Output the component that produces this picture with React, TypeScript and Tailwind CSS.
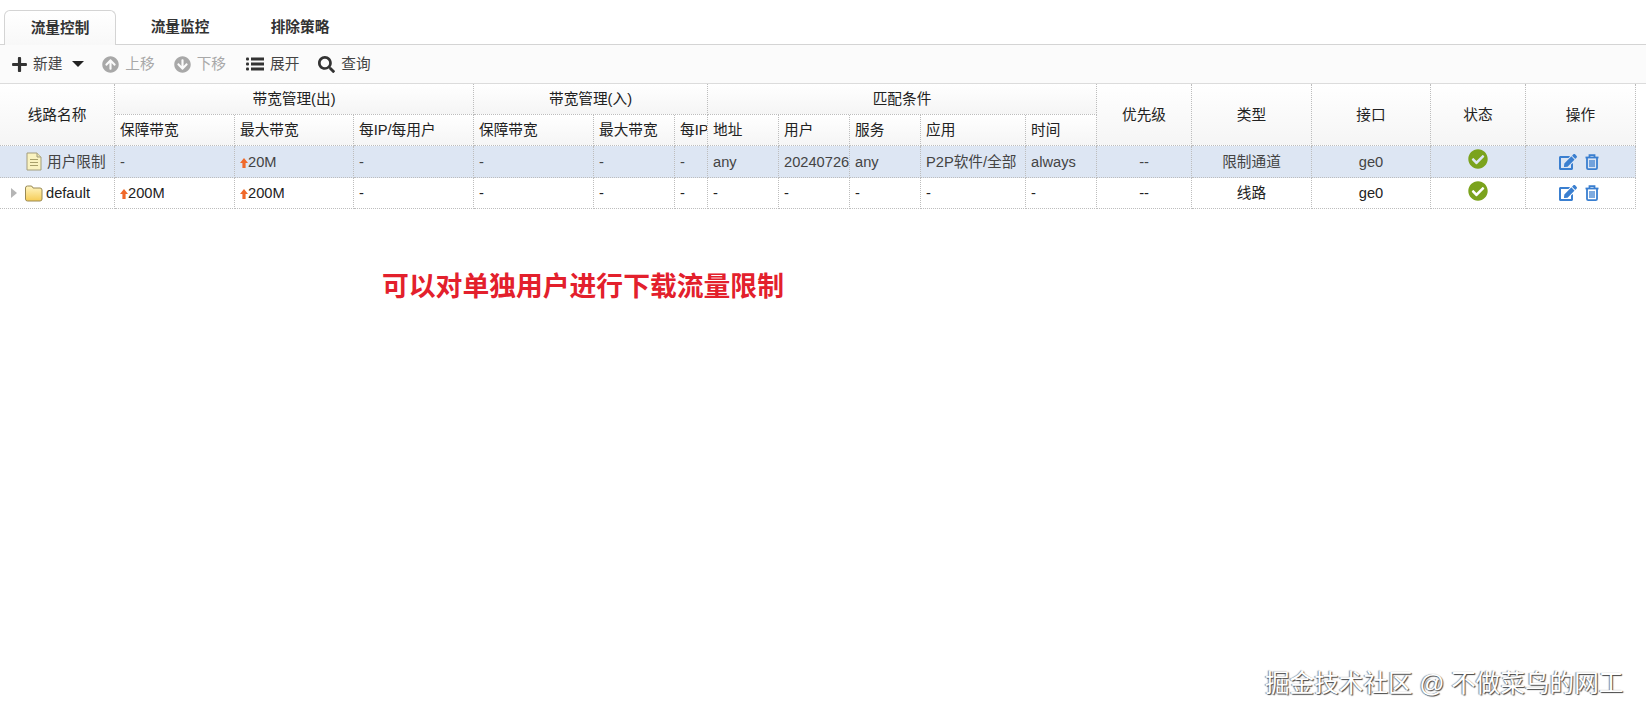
import { FaArrowCircleDown, FaArrowCircleUp, FaCheckCircle, FaEdit, FaPlus, FaSearch } from "react-icons/fa";

const COLUMN_WIDTHS = [115, 120, 119, 120, 120, 81, 33, 71, 71, 71, 105, 71, 95, 120, 119, 95, 110];

const SUB_HEADERS = [
  "保障带宽",
  "最大带宽",
  "每IP/每用户",
  "保障带宽",
  "最大带宽",
  "每IP/每用户",
  "地址",
  "用户",
  "服务",
  "应用",
  "时间",
];

const TABS = ["流量控制", "流量监控", "排除策略"];

const cellBorder = "border-r border-b border-dotted border-[#bdbdbd]";
const headCell = `${cellBorder} bg-gradient-to-b from-white to-[#f5f5f5] font-normal text-[#222] overflow-hidden whitespace-nowrap`;
const textCell = `${cellBorder} px-[5px] overflow-hidden whitespace-nowrap`;
const midCell = `${cellBorder} text-center overflow-hidden whitespace-nowrap`;

function UpArrow() {
  return (
    <svg width="8" height="10" viewBox="0 0 8 10" className="inline-block align-[-1px]">
      <path d="M4 0 L8 5 H5.6 V10 H2.4 V5 H0 Z" fill="#f0692a" />
    </svg>
  );
}

function FolderIcon() {
  return (
    <svg width="19" height="17" viewBox="0 0 19 17">
      <defs>
        <linearGradient id="folder-fill" x1="0" y1="0" x2="0" y2="1">
          <stop offset="0" stopColor="#fff6c4" />
          <stop offset="1" stopColor="#f6cc55" />
        </linearGradient>
      </defs>
      <path
        d="M1.5 3 Q1.5 1 3.5 1 H7 Q8.5 1 9 3 H16 Q18 3 18 5 V14 Q18 16 16 16 H3.5 Q1.5 16 1.5 14 Z"
        fill="url(#folder-fill)"
        stroke="#9a8a55"
      />
    </svg>
  );
}

function NoteIcon() {
  return (
    <svg width="16" height="19" viewBox="0 0 16 19">
      <path d="M1 1 H11 L15 5 V18 H1 Z" fill="#faf3c0" stroke="#a39d7c" />
      <path d="M11 1 V5 H15" fill="#e8e2b0" stroke="#a39d7c" />
      <path d="M4 7.5 H12 M4 10.5 H12 M4 13.5 H12" stroke="#a8a06a" />
    </svg>
  );
}

function ListIcon() {
  return (
    <svg width="18" height="14" viewBox="0 0 18 14" fill="#333" className="ml-[20px]">
      <rect x="0" y="0.5" width="3" height="3" rx="1" />
      <rect x="0" y="5.5" width="3" height="3" rx="1" />
      <rect x="0" y="10.5" width="3" height="3" rx="1" />
      <rect x="5" y="0.5" width="13" height="3" />
      <rect x="5" y="5.5" width="13" height="3" />
      <rect x="5" y="10.5" width="13" height="3" />
    </svg>
  );
}

function TrashIcon() {
  return (
    <svg width="14" height="16" viewBox="0 0 14 16" fill="none" stroke="#3a7fd0" strokeWidth="1.8">
      <path d="M0.5 3.5 H13.5" />
      <path d="M4.5 3.5 V1.2 H9.5 V3.5" />
      <path d="M2 3.5 V14 Q2 15.1 3.2 15.1 H10.8 Q12 15.1 12 14 V3.5" />
      <path d="M5 6 V13 M7 6 V13 M9 6 V13" strokeWidth="1.3" />
    </svg>
  );
}

function Actions() {
  return (
    <div className="flex items-center justify-center gap-[8px] pr-[3px]">
      <FaEdit className="text-[18px] text-[#3a7fd0]" />
      <TrashIcon />
    </div>
  );
}

function Status() {
  return (
    <div className="-mt-[5px] flex justify-center">
      <FaCheckCircle className="text-[20px] text-[#7ba31d]" />
    </div>
  );
}

export default function App() {
  return (
    <div
      className="relative min-h-[719px] overflow-hidden bg-white text-[14.67px] text-[#222]"
      style={{ fontFamily: '"Liberation Sans", "Noto Sans CJK SC", sans-serif' }}
    >
      {/* tabs */}
      <div className="flex h-[45px] items-end border-b border-[#d4d4d4] pl-[4px]">
        {TABS.map((tab, i) => (
          <div
            key={tab}
            className={
              i === 0
                ? "-mb-px mr-[4px] flex h-[35px] w-[112px] items-center justify-center rounded-t-[6px] border border-b-0 border-[#d4d4d4] bg-gradient-to-b from-white to-[#f8f8f8] font-bold text-[#333]"
                : "flex h-[34px] w-[120px] items-center justify-center font-bold text-[#333]"
            }
          >
            {tab}
          </div>
        ))}
      </div>

      {/* toolbar */}
      <div className="flex h-[39px] items-center border-b border-[#dcdcdc] bg-[#fbfbfb] pl-[11px]">
        <FaPlus className="text-[17px] text-[#333]" />
        <span className="ml-[5px] text-[#444]">新建</span>
        <span className="ml-[10px] h-0 w-0 border-x-[6px] border-t-[6px] border-x-transparent border-t-[#222]" />
        <FaArrowCircleUp className="ml-[18px] text-[17px] text-[#a8a8a8]" />
        <span className="ml-[6px] text-[#a8a8a8]">上移</span>
        <FaArrowCircleDown className="ml-[19px] text-[17px] text-[#a8a8a8]" />
        <span className="ml-[6px] text-[#a8a8a8]">下移</span>
        <ListIcon />
        <span className="ml-[6px] text-[#444]">展开</span>
        <FaSearch className="ml-[19px] text-[17px] text-[#333]" />
        <span className="ml-[6px] text-[#444]">查询</span>
      </div>

      {/* policy table */}
      <table className="table-fixed border-separate border-spacing-0" style={{ width: 1636 }}>
        <colgroup>
          {COLUMN_WIDTHS.map((w, i) => (
            <col key={i} style={{ width: w }} />
          ))}
        </colgroup>
        <thead>
          <tr className="h-[31px]">
            <th rowSpan={2} className={headCell}>线路名称</th>
            <th colSpan={3} className={headCell}>带宽管理(出)</th>
            <th colSpan={3} className={headCell}>带宽管理(入)</th>
            <th colSpan={5} className={headCell}>匹配条件</th>
            <th rowSpan={2} className={headCell}>优先级</th>
            <th rowSpan={2} className={headCell}>类型</th>
            <th rowSpan={2} className={headCell}>接口</th>
            <th rowSpan={2} className={headCell}>状态</th>
            <th rowSpan={2} className={headCell}>操作</th>
          </tr>
          <tr className="h-[31px]">
            {SUB_HEADERS.map((label, i) => (
              <th key={i} className={`${headCell} px-[5px] text-left`}>{label}</th>
            ))}
          </tr>
        </thead>
        <tbody>
          <tr className="h-[32px] bg-[#dde6f3] text-[#444]">
            <td className={cellBorder}>
              <div className="flex items-center gap-[5px] pl-[26px] whitespace-nowrap">
                <NoteIcon />
                <span>用户限制</span>
              </div>
            </td>
            <td className={textCell}>-</td>
            <td className={textCell}><UpArrow />20M</td>
            <td className={textCell}>-</td>
            <td className={textCell}>-</td>
            <td className={textCell}>-</td>
            <td className={textCell}>-</td>
            <td className={textCell}>any</td>
            <td className={textCell}>20240726</td>
            <td className={textCell}>any</td>
            <td className={textCell}>P2P软件/全部</td>
            <td className={textCell}>always</td>
            <td className={midCell}>--</td>
            <td className={midCell}>限制通道</td>
            <td className={midCell}>ge0</td>
            <td className={midCell}><Status /></td>
            <td className={midCell}><Actions /></td>
          </tr>
          <tr className="h-[31px] text-[#222]">
            <td className={cellBorder}>
              <div className="flex items-center whitespace-nowrap pl-[11px]">
                <span className="h-0 w-0 border-y-[5px] border-l-[6px] border-y-transparent border-l-[#b5b5b5]" />
                <span className="ml-[7px]"><FolderIcon /></span>
                <span className="ml-[3px]">default</span>
              </div>
            </td>
            <td className={textCell}><UpArrow />200M</td>
            <td className={textCell}><UpArrow />200M</td>
            <td className={textCell}>-</td>
            <td className={textCell}>-</td>
            <td className={textCell}>-</td>
            <td className={textCell}>-</td>
            <td className={textCell}>-</td>
            <td className={textCell}>-</td>
            <td className={textCell}>-</td>
            <td className={textCell}>-</td>
            <td className={textCell}>-</td>
            <td className={midCell}>--</td>
            <td className={midCell}>线路</td>
            <td className={midCell}>ge0</td>
            <td className={midCell}><Status /></td>
            <td className={midCell}><Actions /></td>
          </tr>
        </tbody>
      </table>

      {/* annotation and watermark sit on top of the screenshot */}
      <div className="absolute left-[382px] top-[270px] text-[26.8px] leading-[34px] font-bold text-[#e3202c]">
        可以对单独用户进行下载流量限制
      </div>
      <div className="absolute left-[1265px] top-[667px] text-[24.6px] leading-[34px] whitespace-nowrap text-white [text-shadow:1px_1px_1px_#444,-1px_0_1px_#888]">
        掘金技术社区 @ 不做菜鸟的网工
      </div>
    </div>
  );
}
